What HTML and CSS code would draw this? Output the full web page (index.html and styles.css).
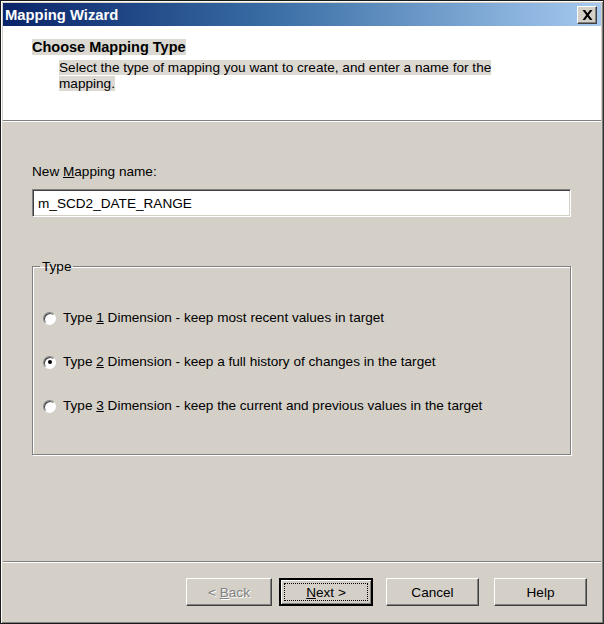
FILE: index.html
```html
<!DOCTYPE html>
<html lang="en">
  <head>
    <meta charset="UTF-8" />
    <title>Mapping Wizard</title>
    <link rel="stylesheet" href="styles.css">
  </head>
  <body>
    <div class="window">
      <div class="titlebar">
        <span class="title">Mapping Wizard</span>
        <button class="close-btn" type="button">
          <svg width="11" height="10" viewBox="0 0 11 10">
            <path d="M0.5 0h2.6l2.4 3.2L7.9 0h2.6L6.8 5l3.7 5H7.9L5.5 6.8 3.1 10H0.5l3.7-5z" fill="#000" />
          </svg>
        </button>
      </div>

      <div class="header">
        <div class="heading"><span>Choose Mapping Type</span></div>
        <p class="desc"><span>Select the type of mapping you want to create, and enter a name for the mapping.</span></p>
      </div>

      <div class="body">
        <label class="name-label" for="mappingName">New <u>M</u>apping name:</label>
        <input id="mappingName" class="name-input" type="text" value="m_SCD2_DATE_RANGE" />

        <fieldset class="type-group">
          <legend>Type</legend>
          <div class="option">
            <span class="radio"></span>
            <span>Type <u>1</u> Dimension - keep most recent values in target</span>
          </div>
          <div class="option">
            <span class="radio checked"></span>
            <span>Type <u>2</u> Dimension - keep a full history of changes in the target</span>
          </div>
          <div class="option">
            <span class="radio"></span>
            <span>Type <u>3</u> Dimension - keep the current and previous values in the target</span>
          </div>
        </fieldset>
      </div>

      <div class="footer">
        <button class="btn back disabled" type="button">&lt; <u>B</u>ack</button>
        <button class="btn next default" type="button"><span class="focus"><u>N</u>ext &gt;</span></button>
        <button class="btn cancel" type="button">Cancel</button>
        <button class="btn help" type="button">Help</button>
      </div>
    </div>
  </body>
</html>
```

FILE: styles.css
```css
* {
  box-sizing: border-box;
}

body {
  margin: 0;
  font-family: "Liberation Sans", Arial, sans-serif;
  font-size: 13.6px;
  color: #000;
  background: #d4d0c8;
}

.window {
  display: flex;
  flex-direction: column;
  height: 624px;
  border: 1px solid #1a1a1a;
  border-right-color: #303030;
  box-shadow: inset 1px 1px 0 #fff, inset -1px -1px 0 #808080;
  padding: 2px;
  background: #d4d0c8;
}

.titlebar {
  display: flex;
  align-items: center;
  justify-content: space-between;
  height: 23px;
  padding: 0 4px 0 2px;
  background: linear-gradient(90deg, #0a246a 0%, #3a6ea5 45%, #a6caf0 100%);
}

.title {
  color: #fff;
  font-weight: bold;
  font-size: 14.8px;
}

.close-btn {
  width: 20px;
  height: 18px;
  padding: 0;
  display: flex;
  align-items: center;
  justify-content: center;
  background: #d4d0c8;
  border: 1px solid;
  border-color: #fff #404040 #404040 #fff;
  box-shadow: inset -1px -1px 0 #808080;
}

.header {
  height: 95px;
  background: #fff;
  padding: 13px 0 0 29px;
  border-bottom: 1px solid #808080;
  box-shadow: 0 1px 0 #fff;
}

.heading span {
  font-weight: bold;
  font-size: 14.5px;
  background: #dcd9d3;
  line-height: 17px;
}

.desc {
  width: 450px;
  margin: 4px 0 0 27px;
  line-height: 16px;
}

.desc span {
  background: #dcd9d3;
}

.body {
  display: flex;
  flex-direction: column;
  padding: 43px 30px 0 29px;
}

.name-label {
  line-height: 16px;
}

.name-input {
  margin-top: 9px;
  height: 28px;
  font: inherit;
  padding: 0 5px;
  border: 1px solid;
  border-color: #808080 #fff #fff #808080;
  box-shadow: inset 1px 1px 0 #404040, inset -1px -1px 0 #d4d0c8;
  background: #fff;
  outline: none;
}

.type-group {
  margin: 42px 0 0;
  padding: 36px 0 30px 10px;
  height: 196px;
  border: 1px solid #808080;
  box-shadow: 1px 1px 0 #fff, inset 1px 1px 0 #fff;
  display: flex;
  flex-direction: column;
  gap: 28px;
}

.type-group legend {
  padding: 0 2px;
  margin-left: -3px;
}

.option {
  display: flex;
  align-items: center;
  gap: 7px;
  line-height: 16px;
}

.radio {
  width: 13px;
  height: 13px;
  border-radius: 50%;
  background: #fff;
  border: 1px solid;
  border-color: #808080 #fff #fff #808080;
  box-shadow: inset 1px 1px 0 #404040;
  position: relative;
}

.radio.checked::after {
  content: "";
  position: absolute;
  left: 3.5px;
  top: 3.5px;
  width: 4px;
  height: 4px;
  border-radius: 50%;
  background: #000;
}

.footer {
  margin-top: auto;
  height: 60px;
  border-top: 1px solid #808080;
  box-shadow: inset 0 1px 0 #fff;
  display: flex;
  justify-content: flex-end;
  align-items: flex-start;
  padding: 16px 14px 0 0;
}

.btn {
  width: 93px;
  height: 28px;
  font: inherit;
  background: #d4d0c8;
  border: 1px solid;
  border-color: #fff #404040 #404040 #fff;
  box-shadow: inset -1px -1px 0 #808080;
  padding: 0;
}

.btn.back {
  width: 86px;
}

.btn.next {
  width: 94px;
  margin-left: 7px;
}

.btn.cancel {
  margin-left: 13px;
}

.btn.help {
  margin-left: 15px;
}

.btn.disabled {
  color: #808080;
  text-shadow: 1px 1px 0 #fff;
}

.btn.default {
  border: 2px solid #000;
  box-shadow: inset 1px 1px 0 #fff, inset -1px -1px 0 #808080;
  padding: 3px;
}

.btn.default .focus {
  display: flex;
  align-items: center;
  justify-content: center;
  height: 100%;
  border: 1px dotted #000;
}
```
